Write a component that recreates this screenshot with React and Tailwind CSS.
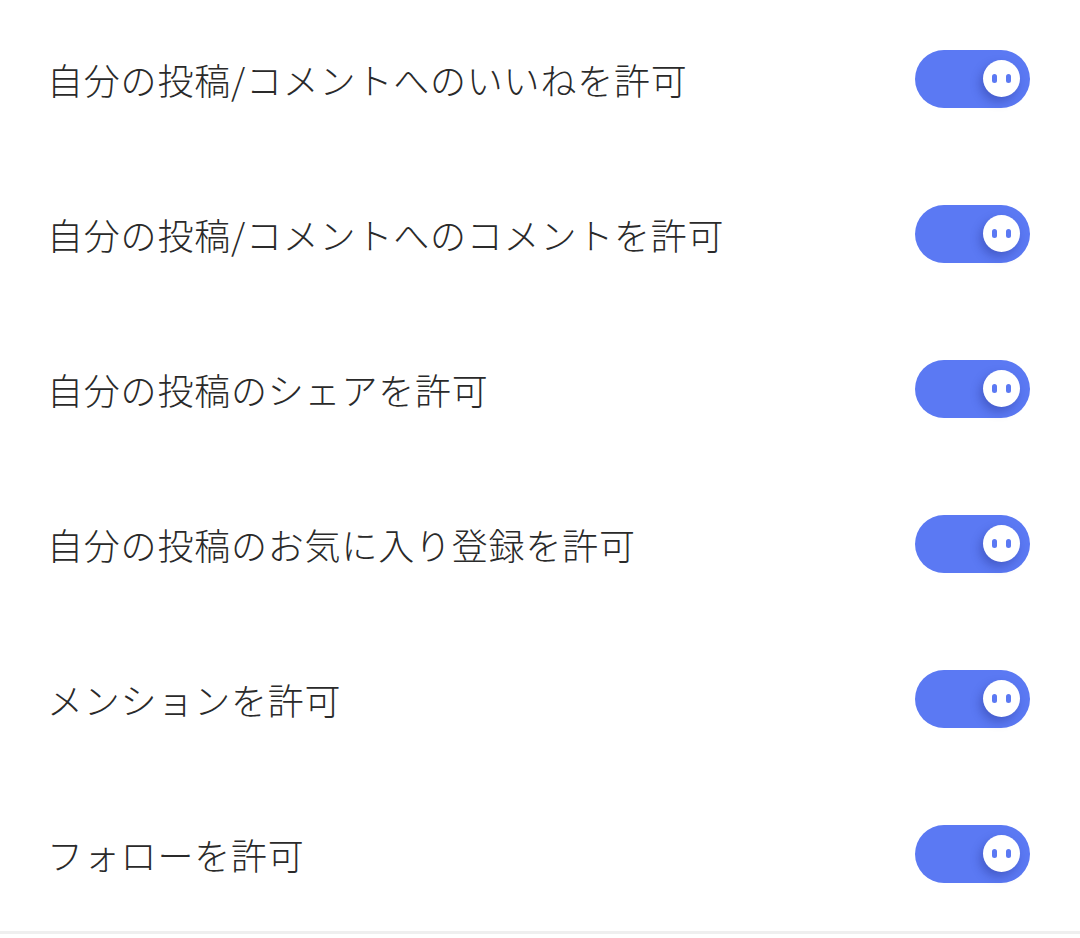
import React from 'react';

const settings = [
  '自分の投稿/コメントへのいいねを許可',
  '自分の投稿/コメントへのコメントを許可',
  '自分の投稿のシェアを許可',
  '自分の投稿のお気に入り登録を許可',
  'メンションを許可',
  'フォローを許可',
];

// Toggle switch with the little "face" knob
function Toggle() {
  return (
    <div className="relative flex h-[58px] w-[115px] shrink-0 items-center justify-end rounded-full bg-[#5b79f3] pr-[10px]">
      <div className="flex h-[37px] w-[37px] items-center justify-center gap-[9px] rounded-full bg-white shadow-[-3px_5px_10px_rgba(30,40,130,0.35)]">
        <span className="h-[9px] w-[5px] rounded-full bg-[#5b79f3]" />
        <span className="h-[9px] w-[5px] rounded-full bg-[#5b79f3]" />
      </div>
    </div>
  );
}

export default function App() {
  return (
    <div
      className="min-h-[938px] w-full bg-white"
      style={{ fontFamily: '"Noto Sans CJK JP", "Noto Sans", sans-serif' }}
    >
      <div className="flex flex-col pt-[1px]">
        {settings.map((label) => (
          <div key={label} className="flex h-[155px] items-center justify-between pl-[47px] pr-[50px]">
            <span className="text-[36px] font-light leading-none tracking-[0.8px] text-[#2a2a2a]">{label}</span>
            <Toggle />
          </div>
        ))}
      </div>
      <div className="h-[3px] w-full bg-[#efefef]" />
    </div>
  );
}
